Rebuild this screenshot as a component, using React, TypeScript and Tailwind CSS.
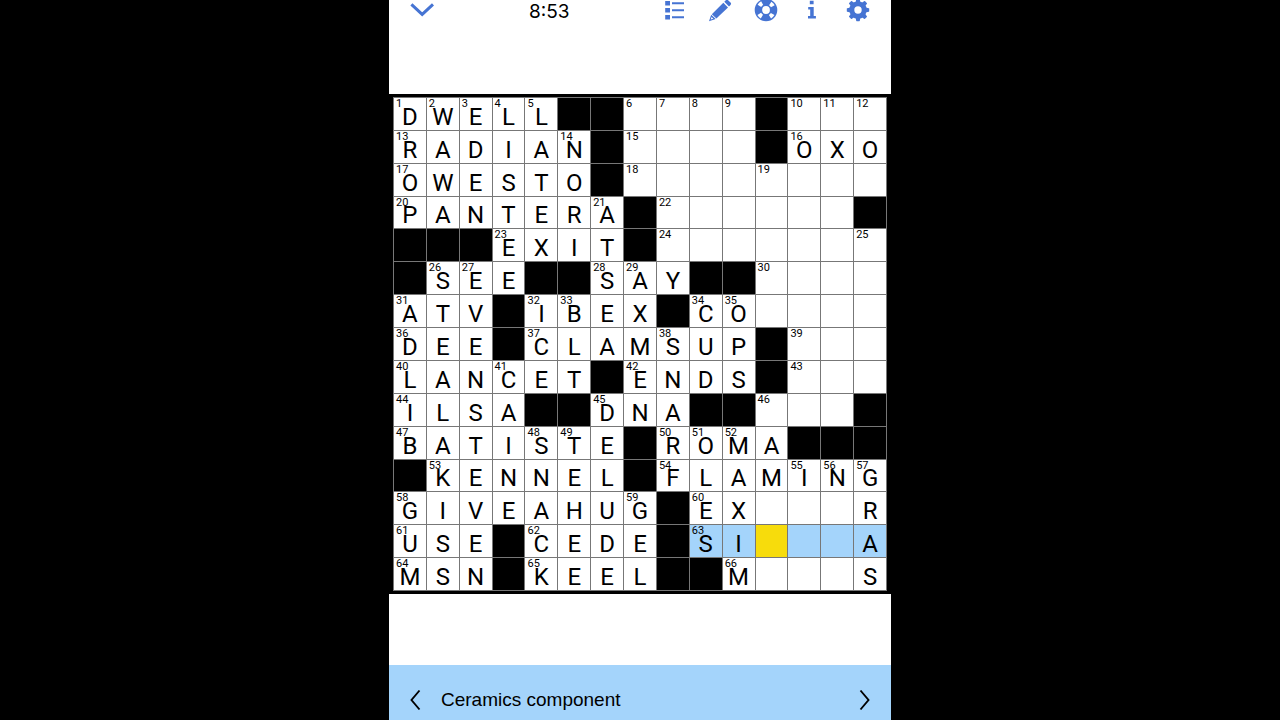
import { useState } from "react";
import clsx from "clsx";

const ROWS = [
  "DWELL##....#...",
  "RADIAN#....#OXO",
  "OWESTO#........",
  "PANTERA#......#",
  "###EXIT#.......",
  "#SEE##SAY##....",
  "ATV#IBEX#CO....",
  "DEE#CLAMSUP#...",
  "LANCET#ENDS#...",
  "ILSA##DNA##...#",
  "BATISTE#ROMA###",
  "#KENNEL#FLAMING",
  "GIVEAHUG#EX...R",
  "USE#CEDE#SI...A",
  "MSN#KEEL##M...S",
];

type Cell = {
  row: number;
  col: number;
  value: string;
  black: boolean;
  number?: number;
};

const isBlack = (row: number, col: number) =>
  (ROWS[row]?.[col] ?? "#") === "#";

// A square is numbered when an across or a down word starts in it
function buildCells(): Cell[] {
  let next = 1;
  return ROWS.flatMap((line, row) =>
    line.split("").map((char, col) => {
      const black = char === "#";
      const across = isBlack(row, col - 1) && !isBlack(row, col + 1);
      const down = isBlack(row - 1, col) && !isBlack(row + 1, col);
      return {
        row,
        col,
        value: char === "." || black ? "" : char,
        black,
        number: !black && (across || down) ? next++ : undefined,
      };
    })
  );
}

const cells = buildCells();

function inWord(cell: Cell, selected: { row: number; col: number }) {
  if (cell.row !== selected.row) return false;
  const from = Math.min(cell.col, selected.col);
  const to = Math.max(cell.col, selected.col);
  return !ROWS[cell.row].slice(from, to + 1).includes("#");
}

function ListIcon() {
  return (
    <svg viewBox="0 0 24 24" className="size-6" fill="currentColor">
      <path d="M3.2 3h4.8v4.4H3.2zM3.2 10h4.8v4.4H3.2zM3.2 17h4.8v4.4H3.2zM10 4.2h12v2H10zM10 11.2h12v2H10zM10 18.2h12v2H10z" />
    </svg>
  );
}

function PencilIcon() {
  return (
    <svg viewBox="0 0 24 24" className="size-6" fill="currentColor">
      <path d="M17.8 2.2a1.6 1.6 0 0 1 2.3 0l2.4 2.4a1.6 1.6 0 0 1 0 2.3l-1.5 1.5-4.7-4.7z" />
      <path d="M15.3 4.8 20 9.5 8.4 20.4 3.8 16.2z" />
      <path
        fillRule="evenodd"
        d="M3.2 16.8 7.7 21 1 23.2zM3.6 19.1l-.9 2.5 2.6-.8z"
      />
    </svg>
  );
}

function HelpIcon() {
  return (
    <svg viewBox="0 0 24 24" className="size-6" fill="none">
      <circle cx="12" cy="12" r="7.6" stroke="currentColor" strokeWidth="7.4" />
      <circle
        cx="12"
        cy="12"
        r="7.8"
        stroke="white"
        strokeWidth="4.2"
        strokeDasharray="3.8 8.45"
        strokeDashoffset="-4.23"
      />
    </svg>
  );
}

function InfoIcon() {
  return (
    <svg viewBox="0 0 24 24" className="size-6" fill="currentColor">
      <path d="M9.8 2.8h3.8v3.4H9.8zM8.2 9h5.5v9h2.2v2.4H8v-2.4h2.2v-6.6h-2z" />
    </svg>
  );
}

function GearIcon() {
  return (
    <svg viewBox="0 0 24 24" className="size-6" fill="none">
      <circle cx="12" cy="12" r="6.2" stroke="currentColor" strokeWidth="5" />
      <g fill="currentColor">
        {[0, 45, 90, 135, 180, 225, 270, 315].map((angle) => (
          <path
            key={angle}
            d="M9.6 4.6 10.2 1.2Q10.3.8 10.7.8h2.6q.4 0 .5.4l.6 3.4z"
            transform={`rotate(${angle} 12 12)`}
          />
        ))}
      </g>
    </svg>
  );
}

const tools = [
  { label: "Clues", Icon: ListIcon },
  { label: "Pencil", Icon: PencilIcon },
  { label: "Help", Icon: HelpIcon },
  { label: "Info", Icon: InfoIcon },
  { label: "Settings", Icon: GearIcon },
];

function Toolbar() {
  return (
    <header className="flex h-5 items-center px-[21px] text-[#4674d3]">
      <button type="button" aria-label="Close" className="mr-[95px]">
        <svg viewBox="0 0 24 24" className="size-6" fill="none">
          <path d="m1.4 6.4 10.8 10 10.8-10" stroke="currentColor" strokeWidth="3" />
        </svg>
      </button>
      <time className="mt-1 text-[19px] leading-6 text-black">8:53</time>
      <nav className="ml-auto flex gap-[22px]">
        {tools.map(({ label, Icon }) => (
          <button key={label} type="button" aria-label={label}>
            <Icon />
          </button>
        ))}
      </nav>
    </header>
  );
}

function Board() {
  const [selected, setSelected] = useState({ row: 13, col: 11 });

  return (
    <div className="border-x-4 border-y-3 border-black">
      <div className="grid aspect-square grid-cols-15 grid-rows-15 gap-px bg-[#777] p-px font-[Roboto,sans-serif]">
        {cells.map((cell) => {
          if (cell.black) {
            return <div key={`${cell.row}-${cell.col}`} className="bg-black" />;
          }
          const active = cell.row === selected.row && cell.col === selected.col;
          return (
            <button
              key={`${cell.row}-${cell.col}`}
              type="button"
              aria-label={`Row ${cell.row + 1}, column ${cell.col + 1}`}
              onClick={() => setSelected({ row: cell.row, col: cell.col })}
              className={clsx(
                "relative flex min-h-0 min-w-0 items-end justify-center pb-px text-2xl leading-6",
                active
                  ? "bg-[#f7dc0c]"
                  : inWord(cell, selected)
                    ? "bg-[#a4d4fb]"
                    : "bg-white"
              )}
            >
              {cell.number && (
                <span className="absolute top-0 left-[2px] text-[11px] leading-3">
                  {cell.number}
                </span>
              )}
              {cell.value}
            </button>
          );
        })}
      </div>
    </div>
  );
}

function ClueBar() {
  return (
    <footer className="flex h-[55px] items-center bg-[#a4d4fb] px-[15px] pt-[15px] text-black">
      <button type="button" aria-label="Previous clue">
        <svg viewBox="0 0 24 24" className="size-6" fill="none">
          <path d="m15.5 2.5-8 9.5 8 9.5" stroke="currentColor" strokeWidth="1.9" />
        </svg>
      </button>
      <p className="ml-[13px] flex-1 font-['Liberation_Sans',Arial,sans-serif] text-[19px] leading-6">
        Ceramics component
      </p>
      <button type="button" aria-label="Next clue">
        <svg viewBox="0 0 24 24" className="size-6" fill="none">
          <path d="m8.5 2.5 8 9.5-8 9.5" stroke="currentColor" strokeWidth="1.9" />
        </svg>
      </button>
    </footer>
  );
}

export default function App() {
  return (
    <div className="flex h-screen justify-center overflow-hidden bg-black font-[Inter,sans-serif]">
      <main className="flex w-full max-w-[502px] flex-col bg-white">
        <Toolbar />
        <div className="mt-[74px] mb-auto">
          <Board />
        </div>
        <ClueBar />
      </main>
    </div>
  );
}
